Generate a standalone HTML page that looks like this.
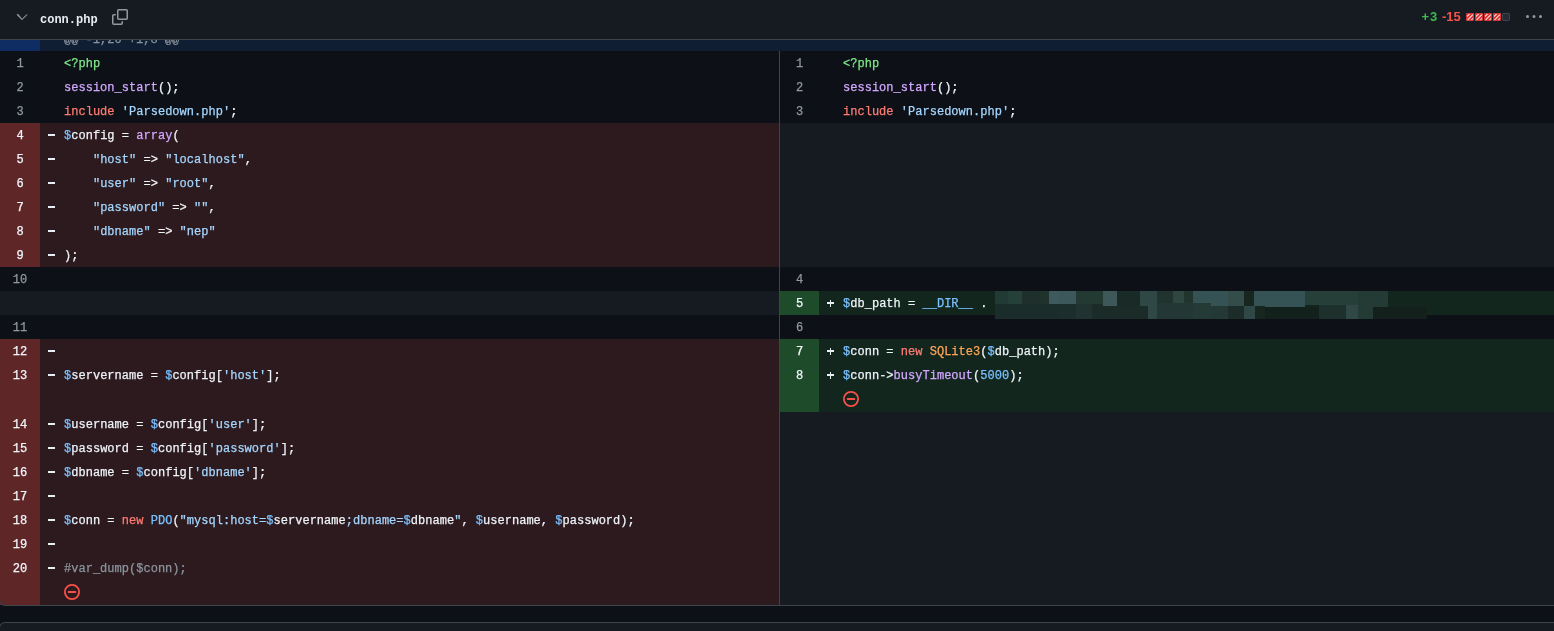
<!DOCTYPE html>
<html><head><meta charset="utf-8">
<style>
html,body{margin:0;padding:0;}
body{width:1554px;height:631px;overflow:hidden;background:#0d1117;position:relative;font-family:"Liberation Mono",monospace;font-size:12px;color:#eef3f8;-webkit-text-stroke:0.25px currentColor;}
.wrap{position:absolute;left:0;top:0;width:1554px;height:631px;will-change:transform;}
.hdr{position:absolute;left:0;top:0;width:1554px;height:39px;background:#161b22;border-bottom:1px solid #3d444d;z-index:5;}
.hdr svg{position:absolute;}
.fname{position:absolute;left:40px;top:1px;line-height:39px;font-weight:bold;font-size:12px;color:#e6edf3;-webkit-text-stroke:0;}
.stat{position:absolute;top:0;line-height:34px;font-family:"Liberation Sans",sans-serif;font-weight:bold;font-size:13px;-webkit-text-stroke:0;}
.sq{position:absolute;top:13px;width:8px;height:8px;border-radius:2px;}
.sq.r{background:repeating-linear-gradient(-45deg,#da3633 0 1.6px,#f0b0ad 1.6px 2.9px);box-shadow:inset 0 0 0 1px #da3633;}
.sq.g{background:#262c36;box-shadow:inset 0 0 0 1px #3d444d;}
.hunk{position:absolute;left:0;top:27px;width:1554px;height:24px;background:#101e34;}
.hunk .hn{position:absolute;left:0;top:0;width:40px;height:24px;background:#0f2d63;}
.hunk .ht{position:absolute;left:64px;top:1px;line-height:24px;color:#8b949e;white-space:pre;}
.row{position:absolute;}
.row .num{position:absolute;left:0;top:0;bottom:0;text-align:center;line-height:26px;color:#9198a1;}
.row .code{position:absolute;top:0;bottom:0;right:0;line-height:24px;white-space:pre;}
.row .mkd{position:absolute;left:8px;top:11.25px;width:7px;height:1.5px;background:#e6edf3;}
.row .mka{position:absolute;left:8px;top:11.25px;width:7px;height:1.5px;background:#e6edf3;}
.row .mkb{position:absolute;left:10.75px;top:8.5px;width:1.5px;height:7px;background:#e6edf3;}
.row .tx{position:absolute;left:24px;top:1px;letter-spacing:0.022px;}
.ctx{background:#0d1117;}
.empty{background:#161b22;}
.del .code{background:#2d1a1e;}
.del .num{background:#5f2628;color:#f0f6fc;}
.add .code{background:#12261e;}
.add .num{background:#1e4b2a;color:#f0f6fc;}
.neico{position:absolute;width:16px;height:16px;}
.neico svg{display:block;}
.k{color:#ff7b72} .f{color:#d2a8ff} .s{color:#a5d6ff} .v{color:#79c0ff} .t{color:#7ee787} .o{color:#ffa657} .c{color:#8b949e}
.vsep{position:absolute;left:779px;top:51px;width:1px;height:554px;background:#3d444d;}
.bot1{position:absolute;left:-1px;top:599px;width:1580px;height:6px;border:1px solid #3d444d;border-top:none;border-radius:0 0 6px 6px;}
.bot2{position:absolute;left:-1px;top:622px;width:1580px;height:40px;background:#161b22;border:1px solid #3d444d;border-bottom:none;border-radius:6px 6px 0 0;}
.px{position:absolute;}
</style></head><body><div class="wrap">
<div class="hunk"><div class="hn"></div><div class="ht">@@ -1,20 +1,8 @@</div></div>
<div class="row ctx" style="top:51px;height:24px;left:0px;width:779px">
<div class="num" style="width:40px">1</div>
<div class="code" style="left:40px">
<span class="tx"><span class="t">&lt;?php</span></span>
</div>
</div>
<div class="row ctx" style="top:75px;height:24px;left:0px;width:779px">
<div class="num" style="width:40px">2</div>
<div class="code" style="left:40px">
<span class="tx"><span class="f">session_start</span>();</span>
</div>
</div>
<div class="row ctx" style="top:99px;height:24px;left:0px;width:779px">
<div class="num" style="width:40px">3</div>
<div class="code" style="left:40px">
<span class="tx"><span class="k">include</span> <span class="s">'Parsedown.php'</span>;</span>
</div>
</div>
<div class="row del" style="top:123px;height:24px;left:0px;width:779px">
<div class="num" style="width:40px">4</div>
<div class="code" style="left:40px">
<span class="mkd"></span>
<span class="tx"><span class="v">$</span>config = <span class="f">array</span>(</span>
</div>
</div>
<div class="row del" style="top:147px;height:24px;left:0px;width:779px">
<div class="num" style="width:40px">5</div>
<div class="code" style="left:40px">
<span class="mkd"></span>
<span class="tx">    <span class="s">"host"</span> =&gt; <span class="s">"localhost"</span>,</span>
</div>
</div>
<div class="row del" style="top:171px;height:24px;left:0px;width:779px">
<div class="num" style="width:40px">6</div>
<div class="code" style="left:40px">
<span class="mkd"></span>
<span class="tx">    <span class="s">"user"</span> =&gt; <span class="s">"root"</span>,</span>
</div>
</div>
<div class="row del" style="top:195px;height:24px;left:0px;width:779px">
<div class="num" style="width:40px">7</div>
<div class="code" style="left:40px">
<span class="mkd"></span>
<span class="tx">    <span class="s">"password"</span> =&gt; <span class="s">""</span>,</span>
</div>
</div>
<div class="row del" style="top:219px;height:24px;left:0px;width:779px">
<div class="num" style="width:40px">8</div>
<div class="code" style="left:40px">
<span class="mkd"></span>
<span class="tx">    <span class="s">"dbname"</span> =&gt; <span class="s">"nep"</span></span>
</div>
</div>
<div class="row del" style="top:243px;height:24px;left:0px;width:779px">
<div class="num" style="width:40px">9</div>
<div class="code" style="left:40px">
<span class="mkd"></span>
<span class="tx">);</span>
</div>
</div>
<div class="row ctx" style="top:267px;height:24px;left:0px;width:779px">
<div class="num" style="width:40px">10</div>
<div class="code" style="left:40px">
</div>
</div>
<div class="row empty" style="top:291px;height:24px;left:0px;width:779px">
<div class="num" style="width:40px"></div>
<div class="code" style="left:40px">
</div>
</div>
<div class="row ctx" style="top:315px;height:24px;left:0px;width:779px">
<div class="num" style="width:40px">11</div>
<div class="code" style="left:40px">
</div>
</div>
<div class="row del" style="top:339px;height:24px;left:0px;width:779px">
<div class="num" style="width:40px">12</div>
<div class="code" style="left:40px">
<span class="mkd"></span>
</div>
</div>
<div class="row del" style="top:363px;height:49px;left:0px;width:779px">
<div class="num" style="width:40px">13</div>
<div class="code" style="left:40px">
<span class="mkd"></span>
<span class="tx"><span class="v">$</span>servername = <span class="v">$</span>config[<span class="s">'host'</span>];</span>
</div>
</div>
<div class="row del" style="top:412px;height:24px;left:0px;width:779px">
<div class="num" style="width:40px">14</div>
<div class="code" style="left:40px">
<span class="mkd"></span>
<span class="tx"><span class="v">$</span>username = <span class="v">$</span>config[<span class="s">'user'</span>];</span>
</div>
</div>
<div class="row del" style="top:436px;height:24px;left:0px;width:779px">
<div class="num" style="width:40px">15</div>
<div class="code" style="left:40px">
<span class="mkd"></span>
<span class="tx"><span class="v">$</span>password = <span class="v">$</span>config[<span class="s">'password'</span>];</span>
</div>
</div>
<div class="row del" style="top:460px;height:24px;left:0px;width:779px">
<div class="num" style="width:40px">16</div>
<div class="code" style="left:40px">
<span class="mkd"></span>
<span class="tx"><span class="v">$</span>dbname = <span class="v">$</span>config[<span class="s">'dbname'</span>];</span>
</div>
</div>
<div class="row del" style="top:484px;height:24px;left:0px;width:779px">
<div class="num" style="width:40px">17</div>
<div class="code" style="left:40px">
<span class="mkd"></span>
</div>
</div>
<div class="row del" style="top:508px;height:24px;left:0px;width:779px">
<div class="num" style="width:40px">18</div>
<div class="code" style="left:40px">
<span class="mkd"></span>
<span class="tx"><span class="v">$</span>conn = <span class="k">new</span> <span class="v">PDO</span>(<span class="s">"mysql:host=</span><span class="v">$</span>servername<span class="s">;dbname=</span><span class="v">$</span>dbname<span class="s">"</span>, <span class="v">$</span>username, <span class="v">$</span>password);</span>
</div>
</div>
<div class="row del" style="top:532px;height:24px;left:0px;width:779px">
<div class="num" style="width:40px">19</div>
<div class="code" style="left:40px">
<span class="mkd"></span>
</div>
</div>
<div class="row del" style="top:556px;height:49px;left:0px;width:779px">
<div class="num" style="width:40px">20</div>
<div class="code" style="left:40px">
<span class="mkd"></span>
<span class="tx"><span class="c">#var_dump($conn);</span></span>
</div>
<div class="neico" style="left:64px;top:28px"><svg class="ne" width="16" height="16" viewBox="0 0 16 16"><circle cx="8" cy="8" r="7.1" fill="none" stroke="#f85149" stroke-width="1.8"/><rect x="3.7" y="7.1" width="8.6" height="1.8" rx="0.9" fill="#f85149"/></svg></div>
</div>
<div class="row ctx" style="top:51px;height:24px;left:780px;width:774px">
<div class="num" style="width:39px">1</div>
<div class="code" style="left:39px">
<span class="tx"><span class="t">&lt;?php</span></span>
</div>
</div>
<div class="row ctx" style="top:75px;height:24px;left:780px;width:774px">
<div class="num" style="width:39px">2</div>
<div class="code" style="left:39px">
<span class="tx"><span class="f">session_start</span>();</span>
</div>
</div>
<div class="row ctx" style="top:99px;height:24px;left:780px;width:774px">
<div class="num" style="width:39px">3</div>
<div class="code" style="left:39px">
<span class="tx"><span class="k">include</span> <span class="s">'Parsedown.php'</span>;</span>
</div>
</div>
<div class="row empty" style="top:123px;height:24px;left:780px;width:774px">
<div class="num" style="width:39px"></div>
<div class="code" style="left:39px">
</div>
</div>
<div class="row empty" style="top:147px;height:24px;left:780px;width:774px">
<div class="num" style="width:39px"></div>
<div class="code" style="left:39px">
</div>
</div>
<div class="row empty" style="top:171px;height:24px;left:780px;width:774px">
<div class="num" style="width:39px"></div>
<div class="code" style="left:39px">
</div>
</div>
<div class="row empty" style="top:195px;height:24px;left:780px;width:774px">
<div class="num" style="width:39px"></div>
<div class="code" style="left:39px">
</div>
</div>
<div class="row empty" style="top:219px;height:24px;left:780px;width:774px">
<div class="num" style="width:39px"></div>
<div class="code" style="left:39px">
</div>
</div>
<div class="row empty" style="top:243px;height:24px;left:780px;width:774px">
<div class="num" style="width:39px"></div>
<div class="code" style="left:39px">
</div>
</div>
<div class="row ctx" style="top:267px;height:24px;left:780px;width:774px">
<div class="num" style="width:39px">4</div>
<div class="code" style="left:39px">
</div>
</div>
<div class="row add" style="top:291px;height:24px;left:780px;width:774px">
<div class="num" style="width:39px">5</div>
<div class="code" style="left:39px">
<span class="mka"></span><span class="mkb"></span>
<span class="tx"><span class="v">$</span>db_path = <span class="v">__DIR__</span> . </span>
</div>
</div>
<div class="row ctx" style="top:315px;height:24px;left:780px;width:774px">
<div class="num" style="width:39px">6</div>
<div class="code" style="left:39px">
</div>
</div>
<div class="row add" style="top:339px;height:24px;left:780px;width:774px">
<div class="num" style="width:39px">7</div>
<div class="code" style="left:39px">
<span class="mka"></span><span class="mkb"></span>
<span class="tx"><span class="v">$</span>conn = <span class="k">new</span> <span class="o">SQLite3</span>(<span class="v">$</span>db_path);</span>
</div>
</div>
<div class="row add" style="top:363px;height:49px;left:780px;width:774px">
<div class="num" style="width:39px">8</div>
<div class="code" style="left:39px">
<span class="mka"></span><span class="mkb"></span>
<span class="tx"><span class="v">$</span>conn-&gt;<span class="f">busyTimeout</span>(<span class="v">5000</span>);</span>
</div>
<div class="neico" style="left:63px;top:28px"><svg class="ne" width="16" height="16" viewBox="0 0 16 16"><circle cx="8" cy="8" r="7.1" fill="none" stroke="#f85149" stroke-width="1.8"/><rect x="3.7" y="7.1" width="8.6" height="1.8" rx="0.9" fill="#f85149"/></svg></div>
</div>
<div class="row empty" style="top:412px;height:24px;left:780px;width:774px">
<div class="num" style="width:39px"></div>
<div class="code" style="left:39px">
</div>
</div>
<div class="row empty" style="top:436px;height:24px;left:780px;width:774px">
<div class="num" style="width:39px"></div>
<div class="code" style="left:39px">
</div>
</div>
<div class="row empty" style="top:460px;height:24px;left:780px;width:774px">
<div class="num" style="width:39px"></div>
<div class="code" style="left:39px">
</div>
</div>
<div class="row empty" style="top:484px;height:24px;left:780px;width:774px">
<div class="num" style="width:39px"></div>
<div class="code" style="left:39px">
</div>
</div>
<div class="row empty" style="top:508px;height:24px;left:780px;width:774px">
<div class="num" style="width:39px"></div>
<div class="code" style="left:39px">
</div>
</div>
<div class="row empty" style="top:532px;height:24px;left:780px;width:774px">
<div class="num" style="width:39px"></div>
<div class="code" style="left:39px">
</div>
</div>
<div class="row empty" style="top:556px;height:49px;left:780px;width:774px">
<div class="num" style="width:39px"></div>
<div class="code" style="left:39px">
</div>
</div>
<div class="vsep"></div>
<div class="px" style="left:995px;top:291px;width:13px;height:13px;background:#213a33"></div>
<div class="px" style="left:1008px;top:291px;width:14px;height:13px;background:#254039"></div>
<div class="px" style="left:1022px;top:291px;width:18px;height:13px;background:#1f302c"></div>
<div class="px" style="left:1040px;top:291px;width:9px;height:13px;background:#1f332c"></div>
<div class="px" style="left:1049px;top:291px;width:10px;height:13px;background:#3e5a5c"></div>
<div class="px" style="left:1059px;top:291px;width:17px;height:13px;background:#3d585b"></div>
<div class="px" style="left:1076px;top:291px;width:27px;height:13px;background:#223a32"></div>
<div class="px" style="left:1103px;top:291px;width:14px;height:15px;background:#3e5859"></div>
<div class="px" style="left:1117px;top:291px;width:23px;height:15px;background:#1a2b27"></div>
<div class="px" style="left:1140px;top:291px;width:17px;height:15px;background:#2f4745"></div>
<div class="px" style="left:1157px;top:291px;width:16px;height:12px;background:#20332e"></div>
<div class="px" style="left:1173px;top:291px;width:11px;height:12px;background:#2e4540"></div>
<div class="px" style="left:1184px;top:291px;width:9px;height:12px;background:#1f352d"></div>
<div class="px" style="left:1193px;top:291px;width:35px;height:12px;background:#355354"></div>
<div class="px" style="left:1211px;top:303px;width:17px;height:3px;background:#355354"></div>
<div class="px" style="left:1228px;top:291px;width:16px;height:15px;background:#344c4a"></div>
<div class="px" style="left:1244px;top:291px;width:10px;height:15px;background:#17261f"></div>
<div class="px" style="left:1254px;top:291px;width:51px;height:16px;background:#355354"></div>
<div class="px" style="left:1305px;top:291px;width:53px;height:14px;background:#263f39"></div>
<div class="px" style="left:1358px;top:291px;width:30px;height:16px;background:#233b34"></div>
<div class="px" style="left:995px;top:304px;width:64px;height:15px;background:#1b2d2a"></div>
<div class="px" style="left:1059px;top:304px;width:17px;height:15px;background:#1c2e2b"></div>
<div class="px" style="left:1076px;top:304px;width:16px;height:15px;background:#203330"></div>
<div class="px" style="left:1092px;top:304px;width:11px;height:15px;background:#1b2b27"></div>
<div class="px" style="left:1103px;top:306px;width:45px;height:13px;background:#1b2c28"></div>
<div class="px" style="left:1148px;top:306px;width:9px;height:13px;background:#2f4745"></div>
<div class="px" style="left:1157px;top:303px;width:36px;height:16px;background:#233834"></div>
<div class="px" style="left:1193px;top:303px;width:18px;height:16px;background:#233a35"></div>
<div class="px" style="left:1211px;top:306px;width:17px;height:13px;background:#243935"></div>
<div class="px" style="left:1228px;top:306px;width:16px;height:13px;background:#1c2c29"></div>
<div class="px" style="left:1244px;top:306px;width:11px;height:13px;background:#2f4846"></div>
<div class="px" style="left:1255px;top:306px;width:10px;height:13px;background:#17261f"></div>
<div class="px" style="left:1265px;top:307px;width:54px;height:12px;background:#12211c"></div>
<div class="px" style="left:1319px;top:305px;width:27px;height:14px;background:#1e302c"></div>
<div class="px" style="left:1346px;top:305px;width:12px;height:14px;background:#2f4846"></div>
<div class="px" style="left:1358px;top:305px;width:15px;height:14px;background:#233b34"></div>
<div class="px" style="left:1373px;top:307px;width:54px;height:12px;background:#13201b"></div>
<div class="bot1"></div>
<div class="bot2"></div>
<div class="hdr">
<svg style="left:14px;top:9px" width="16" height="16" viewBox="0 0 16 16"><path fill="#9198a1" stroke="#9198a1" stroke-width="0.35" d="M12.78 5.22a.749.749 0 0 1 0 1.06l-4.25 4.25a.749.749 0 0 1-1.06 0L3.22 6.28a.749.749 0 1 1 1.06-1.06L8 9.94l3.72-3.72a.749.749 0 0 1 1.06 0Z"></path></svg>
<div class="fname">conn.php</div>
<svg style="left:112px;top:9px" width="16" height="16" viewBox="0 0 16 16"><path fill="#9198a1" d="M0 6.75C0 5.784.784 5 1.75 5h1.5a.75.75 0 0 1 0 1.5h-1.5a.25.25 0 0 0-.25.25v7.5c0 .138.112.25.25.25h7.5a.25.25 0 0 0 .25-.25v-1.5a.75.75 0 0 1 1.5 0v1.5A1.75 1.75 0 0 1 9.25 16h-7.5A1.75 1.75 0 0 1 0 14.25Z"></path><path fill="#9198a1" d="M5 1.75C5 .784 5.784 0 6.75 0h7.5C15.216 0 16 .784 16 1.75v7.5A1.75 1.75 0 0 1 14.25 11h-7.5A1.75 1.75 0 0 1 5 9.25Zm1.75-.25a.25.25 0 0 0-.25.25v7.5c0 .138.112.25.25.25h7.5a.25.25 0 0 0 .25-.25v-7.5a.25.25 0 0 0-.25-.25Z"></path></svg>
<div class="stat" style="left:1421.5px;color:#3fb950;letter-spacing:0.8px">+3</div>
<div class="stat" style="left:1442px;color:#f85149">-15</div>
<div class="sq r" style="left:1466px"></div>
<div class="sq r" style="left:1475px"></div>
<div class="sq r" style="left:1484px"></div>
<div class="sq r" style="left:1493px"></div>
<div class="sq g" style="left:1502px"></div>
<svg style="left:1526px;top:9px" width="16" height="16" viewBox="0 0 16 16"><path fill="#9198a1" d="M8 9a1.5 1.5 0 1 0 0-3 1.5 1.5 0 0 0 0 3ZM1.5 9a1.5 1.5 0 1 0 0-3 1.5 1.5 0 0 0 0 3Zm13 0a1.5 1.5 0 1 0 0-3 1.5 1.5 0 0 0 0 3Z"></path></svg>
</div>
</div></body></html>
